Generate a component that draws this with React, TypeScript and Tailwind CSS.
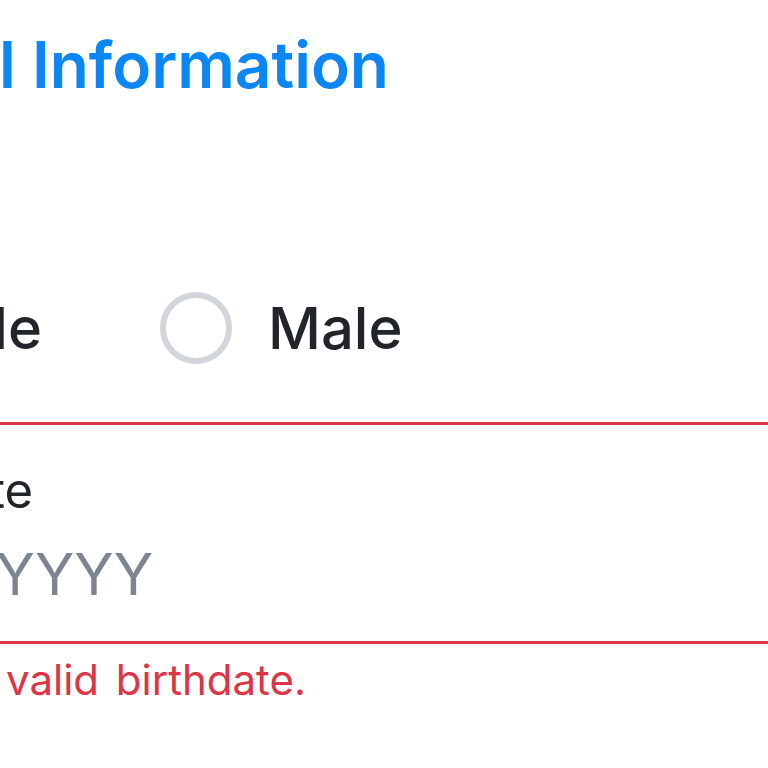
export default function App() {
  return (
    <div className="h-[768px] w-[768px] overflow-hidden bg-white font-['Inter',sans-serif] text-[#212529]">
      {/* heading */}
      <div className="mt-[33px] flex w-[389px] justify-end">
        <h2 className="whitespace-nowrap text-[64px] font-semibold leading-[64px] text-[#0a87f5]">Personal Information</h2>
      </div>

      {/* gender radios */}
      <div className="mt-[195px] flex h-[72px] items-center">
        <div className="flex w-[42px] justify-end">
          <label className="flex items-center gap-6 whitespace-nowrap text-[58px] font-medium leading-[72px]">
            <span className="h-[72px] w-[72px] shrink-0 rounded-full border-[6px] border-[#d2d5d9]" />
            Female
          </label>
        </div>
        <label className="ml-[118px] flex items-center gap-[36px] whitespace-nowrap text-[58px] font-medium leading-[72px]">
          <span className="h-[72px] w-[72px] shrink-0 rounded-full border-[6px] border-[#d2d5d9] bg-white" />
          Male
        </label>
      </div>

      {/* birthdate field */}
      <div className="mt-[58px] h-[222px] w-[1000px] border-y-[3px] border-[#dc3545]">
        <div className="mt-[41px] flex w-[33px] justify-end">
          <span className="whitespace-nowrap text-[49px] leading-[49px] text-[#212529]">Birthdate</span>
        </div>
        <div className="mt-[30px] flex w-[153px] justify-end">
          <span className="whitespace-nowrap text-[58px] leading-[58px] text-[#7f8590]">MM/DD/YYYY</span>
        </div>
      </div>

      {/* error */}
      <div className="mt-[15px] flex w-[306px] justify-end">
        <p className="whitespace-nowrap text-[42px] leading-[42px] [word-spacing:5px] text-[#dc3545]">Please enter a valid birthdate.</p>
      </div>
    </div>
  );
}
